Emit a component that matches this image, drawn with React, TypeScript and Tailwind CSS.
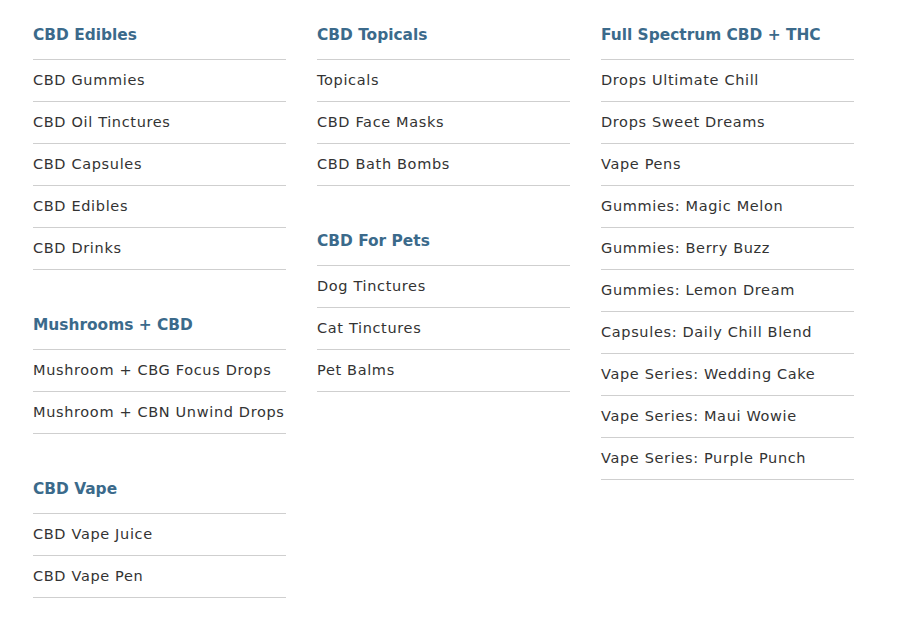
import React from "react";

interface MenuSection {
  title: string;
  items: string[];
}

const COLUMNS: MenuSection[][] = [
  [
    {
      title: "CBD Edibles",
      items: ["CBD Gummies", "CBD Oil Tinctures", "CBD Capsules", "CBD Edibles", "CBD Drinks"],
    },
    {
      title: "Mushrooms + CBD",
      items: ["Mushroom + CBG Focus Drops", "Mushroom + CBN Unwind Drops"],
    },
    {
      title: "CBD Vape",
      items: ["CBD Vape Juice", "CBD Vape Pen"],
    },
  ],
  [
    {
      title: "CBD Topicals",
      items: ["Topicals", "CBD Face Masks", "CBD Bath Bombs"],
    },
    {
      title: "CBD For Pets",
      items: ["Dog Tinctures", "Cat Tinctures", "Pet Balms"],
    },
  ],
  [
    {
      title: "Full Spectrum CBD + THC",
      items: [
        "Drops Ultimate Chill",
        "Drops Sweet Dreams",
        "Vape Pens",
        "Gummies: Magic Melon",
        "Gummies: Berry Buzz",
        "Gummies: Lemon Dream",
        "Capsules: Daily Chill Blend",
        "Vape Series: Wedding Cake",
        "Vape Series: Maui Wowie",
        "Vape Series: Purple Punch",
      ],
    },
  ],
];

function Section({ section }: { section: MenuSection }) {
  return (
    <div className="mb-10">
      <h3 className="border-b border-[#cfcfcf] pb-[10px] pt-[1px] text-[15.4px] font-bold leading-[28px] text-[#3b6a8b]">
        {section.title}
      </h3>
      <ul>
        {section.items.map((item) => (
          <li
            key={item}
            className="flex h-[42px] items-center border-b border-[#cfcfcf] pt-[1px] text-[14.5px] tracking-[0.65px] text-[#333333]"
          >
            {item}
          </li>
        ))}
      </ul>
    </div>
  );
}

export default function App() {
  return (
    <div
      className="min-h-[632px] w-[899px] bg-white pl-[33px] pt-5"
      style={{ fontFamily: '"DejaVu Sans", "Liberation Sans", sans-serif' }}
    >
      <div className="grid grid-cols-[253px_253px_253px] gap-x-[31px]">
        {COLUMNS.map((column, index) => (
          <div key={index}>
            {column.map((section) => (
              <Section key={section.title} section={section} />
            ))}
          </div>
        ))}
      </div>
    </div>
  );
}
